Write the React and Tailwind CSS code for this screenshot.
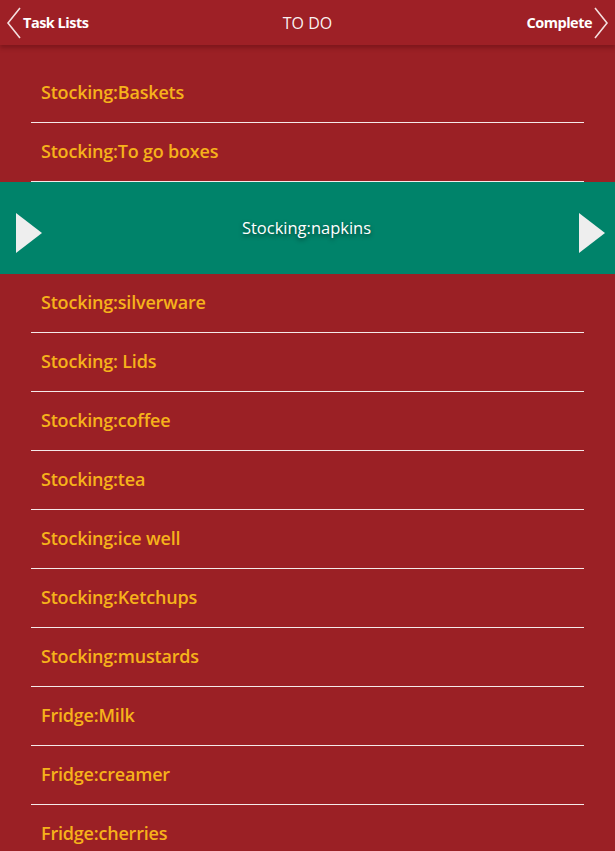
const before = [
  "Stocking:Baskets",
  "Stocking:To go boxes",
];

const after = [
  "Stocking:silverware",
  "Stocking: Lids",
  "Stocking:coffee",
  "Stocking:tea",
  "Stocking:ice well",
  "Stocking:Ketchups",
  "Stocking:mustards",
  "Fridge:Milk",
  "Fridge:creamer",
  "Fridge:cherries",
];

function Row({ label }) {
  return (
    <li className="mx-[31px] h-[59px] border-b border-white/90 flex items-center pl-[10px] pb-[2px]">
      <span className="text-[18px] font-semibold text-[#f6b21b] tracking-[-0.2px]">
        {label}
      </span>
    </li>
  );
}

function Chevron({ flip }) {
  return (
    <svg width="16" height="32" viewBox="0 0 16 32" className={flip ? "rotate-180" : ""}>
      <path d="M14 1 L2 16 L14 31" fill="none" stroke="#f4dede" strokeWidth="1.6" />
    </svg>
  );
}

function Play() {
  return (
    <svg width="26" height="40" viewBox="0 0 26 40">
      <path d="M0 0 L26 20 L0 40 Z" fill="#eeeeee" />
    </svg>
  );
}

export default function App() {
  return (
    <div className="w-[615px] h-[851px] overflow-hidden bg-[#9b2025] font-['Open_Sans',sans-serif]">
      <header className="relative h-[45px] bg-[#9e2026] shadow-[0_3px_4px_rgba(90,10,15,0.45)] flex items-center justify-between px-[6px] text-white">
        <div className="flex items-center gap-[1px]">
          <Chevron />
          <span className="text-[14.5px] font-bold tracking-[-0.5px]">Task Lists</span>
        </div>
        <span className="absolute left-1/2 -translate-x-1/2 text-[16px] text-white/95">TO DO</span>
        <div className="flex items-center gap-[1px]">
          <span className="text-[14.5px] font-bold tracking-[-0.5px]">Complete</span>
          <Chevron flip />
        </div>
      </header>

      <ul className="pt-[19px]">
        {before.map((t) => (
          <Row key={t} label={t} />
        ))}
        <li className="h-[92px] bg-[#00836a] flex items-center justify-between pl-[16px] pr-[10px] pt-[10px]">
          <Play />
          <span className="text-[16.5px] text-white -mt-[10px] -translate-x-[4px] [text-shadow:0_2px_4px_rgba(0,0,0,0.5)]">
            Stocking:napkins
          </span>
          <Play />
        </li>
        {after.map((t) => (
          <Row key={t} label={t} />
        ))}
      </ul>
    </div>
  );
}
